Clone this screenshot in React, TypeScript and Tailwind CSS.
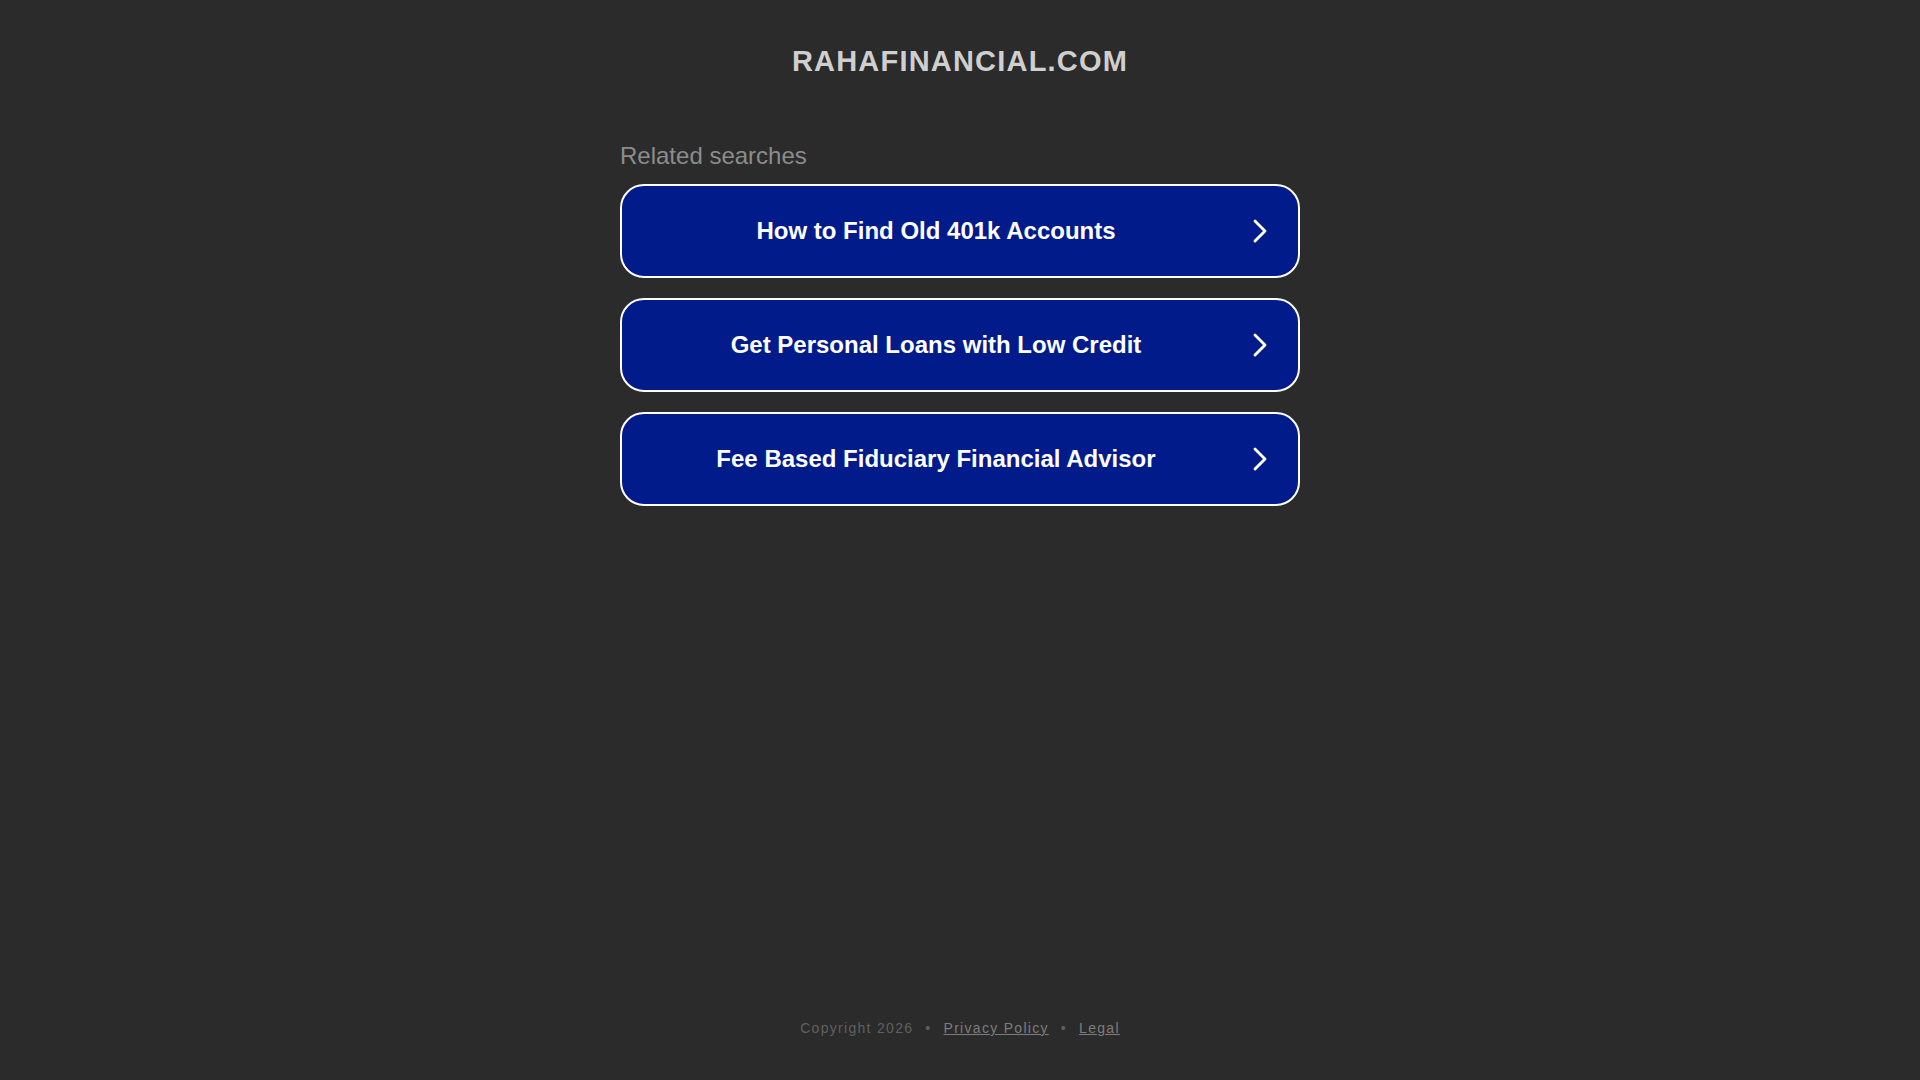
import { ChevronRight } from "lucide-react";

const searches = [
  "How to Find Old 401k Accounts",
  "Get Personal Loans with Low Credit",
  "Fee Based Fiduciary Financial Advisor",
];

export default function App() {
  return (
    <div className="flex min-h-screen flex-col bg-[#2b2b2b] font-['Liberation_Sans',Arial,sans-serif]">
      <header className="pt-[44px] text-center">
        <h1 className="text-[29px] font-bold leading-[34px] tracking-[1.2px] text-[#cfcfcf]">
          RAHAFINANCIAL.COM
        </h1>
      </header>

      <main className="mx-auto mt-[64px] w-[680px]">
        <div className="text-[24px] leading-[28px] text-[#8c8c8c]">Related searches</div>
        <div className="mt-[14px] flex flex-col gap-[20px]">
          {searches.map((q) => (
            <a
              key={q}
              href="#"
              className="relative flex h-[94px] items-center justify-center rounded-[24px] border-2 border-white bg-[#011b8b] pr-[52px] pl-[4px] text-[24px] font-bold text-white"
            >
              <span>{q}</span>
              <ChevronRight
                className="absolute top-1/2 right-[18px] h-[40px] w-[40px] -translate-y-1/2"
                strokeWidth={1.7}
              />
            </a>
          ))}
        </div>
      </main>

      <footer className="mt-auto pb-[41px] text-center text-[14px] tracking-[1.3px] text-[#606060]">
        <span>Copyright 2026</span>
        <span className="mx-[12px]">•</span>
        <a href="#" className="text-[#7d7d7d] underline">Privacy Policy</a>
        <span className="mx-[12px]">•</span>
        <a href="#" className="text-[#7d7d7d] underline">Legal</a>
      </footer>
    </div>
  );
}
